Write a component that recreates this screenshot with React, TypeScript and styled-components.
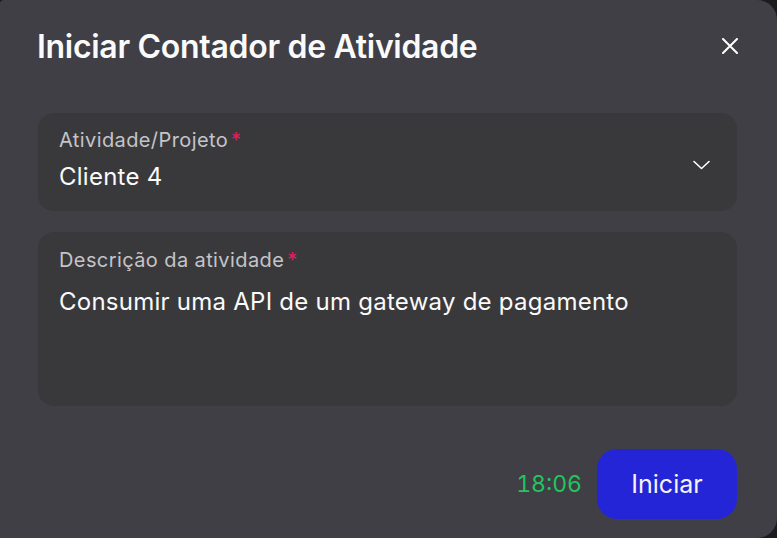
import React from "react";
import styled, { createGlobalStyle } from "styled-components";

const GlobalStyle = createGlobalStyle`
  html, body {
    margin: 0;
    padding: 0;
    background: #1c1c1f;
    font-family: Inter, "Noto Sans", sans-serif;
  }
  * { box-sizing: border-box; }
`;

const Modal = styled.section`
  width: 777px;
  height: 538px;
  background: #3f3f45;
  border-radius: 4px 20px 20px 0;
  padding: 26px 40px 19px 38px;
  display: flex;
  flex-direction: column;
`;

const Header = styled.header`
  display: flex;
  align-items: center;
  justify-content: space-between;
  height: 40px;
  margin-bottom: 47px;
`;

const Title = styled.h2`
  margin: 0 0 0 -1px;
  color: #fafafa;
  font-size: 32px;
  font-weight: 600;
  letter-spacing: -0.3px;
`;

const CloseButton = styled.button`
  background: transparent;
  border: none;
  padding: 0;
  width: 24px;
  height: 24px;
  display: flex;
  align-items: center;
  justify-content: center;
  color: #fff;
  margin-right: -5px;
  cursor: pointer;
`;

const Fields = styled.div`
  display: flex;
  flex-direction: column;
  gap: 21px;
`;

const Field = styled.div<{ $tall?: boolean }>`
  background: #39393c;
  border-radius: 16px;
  padding: ${(p) => (p.$tall ? "16px 21px 0" : "15px 21px 0")};
  height: ${(p) => (p.$tall ? "174px" : "98px")};
  display: flex;
  align-items: flex-start;
  justify-content: space-between;
`;

const FieldBody = styled.div`
  display: flex;
  flex-direction: column;
`;

const Label = styled.span<{ $gap: number }>`
  color: #c4c4c9;
  font-size: 20px;
  line-height: 24px;
  letter-spacing: 0.4px;
  margin-bottom: ${(p) => p.$gap}px;
`;

const Required = styled.span`
  color: #e11d63;
  margin-left: 3px;
`;

const Value = styled.span`
  color: #fafafa;
  font-size: 24px;
  line-height: 30px;
  letter-spacing: 0.25px;
`;

const Chevron = styled.span`
  align-self: center;
  margin-top: -10px;
  margin-right: 6px;
  display: flex;
  color: #fff;
`;

const Footer = styled.footer`
  margin-top: auto;
  display: flex;
  align-items: center;
  justify-content: flex-end;
  gap: 15px;
`;

const Timer = styled.span`
  color: #22c55e;
  font-size: 23px;
  font-variant-numeric: tabular-nums;
`;

const StartButton = styled.button`
  width: 140px;
  height: 70px;
  border: none;
  border-radius: 20px;
  background: #2525d8;
  color: #f4f4f8;
  font-family: Inter, sans-serif;
  font-size: 25px;
  cursor: pointer;
`;

export default function App() {
  return (
    <>
      <GlobalStyle />
      <Modal>
        <Header>
          <Title>Iniciar Contador de Atividade</Title>
          <CloseButton aria-label="Fechar">
            <svg width="16" height="16" viewBox="0 0 16 16" fill="none" stroke="currentColor" strokeWidth="2" strokeLinecap="round">
              <path d="M1 1L15 15M15 1L1 15" />
            </svg>
          </CloseButton>
        </Header>
        <Fields>
          <Field>
            <FieldBody>
              <Label $gap={10}>
                Atividade/Projeto<Required>*</Required>
              </Label>
              <Value>Cliente 4</Value>
            </FieldBody>
            <Chevron>
              <svg width="17" height="10" viewBox="0 0 17 10" fill="none" stroke="currentColor" strokeWidth="1.6" strokeLinecap="round" strokeLinejoin="round">
                <path d="M1 1.5L8.5 8.5L16 1.5" />
              </svg>
            </Chevron>
          </Field>
          <Field $tall>
            <FieldBody>
              <Label $gap={15}>
                Descrição da atividade<Required>*</Required>
              </Label>
              <Value>Consumir uma API de um gateway de pagamento</Value>
            </FieldBody>
          </Field>
        </Fields>
        <Footer>
          <Timer>18:06</Timer>
          <StartButton>Iniciar</StartButton>
        </Footer>
      </Modal>
    </>
  );
}
